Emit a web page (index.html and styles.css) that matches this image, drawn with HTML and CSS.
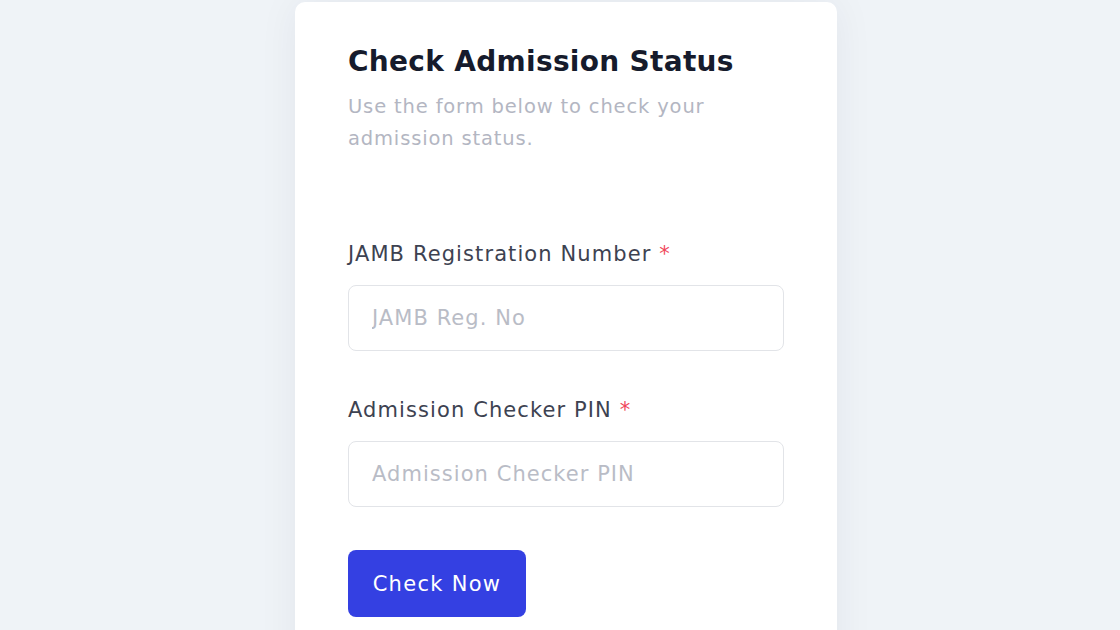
FILE: index.html
```html
<!DOCTYPE html>
<html lang="en">
  <head>
    <meta charset="UTF-8" />
    <meta name="viewport" content="width=device-width, initial-scale=1.0" />
    <title>Check Admission Status</title>
    <link rel="stylesheet" href="styles.css">
  </head>
  <body>
    <div class="page">
      <div class="card">
        <h1>Check Admission Status</h1>
        <p class="lead">Use the form below to check your admission status.</p>

        <form action="" class="check-form">
          <label for="reg-no">JAMB Registration Number <span class="req">*</span></label>
          <input type="text" id="reg-no" placeholder="JAMB Reg. No" />

          <label for="pin" class="second">Admission Checker PIN <span class="req">*</span></label>
          <input type="text" id="pin" placeholder="Admission Checker PIN" />

          <button type="submit" class="btn">Check Now</button>
        </form>
      </div>
    </div>
  </body>
</html>
```

FILE: styles.css
```css
html,
body {
  margin: 0;
  height: 100%;
  overflow: hidden;
}
body {
  font-family: "DejaVu Sans", "Open Sans", sans-serif;
  background-color: #eff3f7;
  color: #111827;
}
.page {
  display: flex;
  justify-content: center;
  padding: 2px 0 0 12px;
}
.card {
  width: 542px;
  box-sizing: border-box;
  background: #fff;
  border-radius: 10px;
  box-shadow: 0 0 40px rgba(30, 40, 70, 0.06);
  padding: 42px 53px 80px 53px;
  min-height: 700px;
}
h1 {
  margin: 0;
  font-size: 28px;
  line-height: 36px;
  font-weight: 600;
  letter-spacing: 0.3px;
  color: #161b2c;
}
.lead {
  margin: 11px 0 0;
  font-size: 19.5px;
  line-height: 32px;
  letter-spacing: 0.85px;
  color: #b3b6c2;
  max-width: 390px;
}
.check-form {
  display: flex;
  flex-direction: column;
  align-items: flex-start;
  margin-top: 84px;
}
label {
  font-size: 21px;
  line-height: 30px;
  letter-spacing: 1.1px;
  color: #3d4251;
}
label.second {
  margin-top: 44px;
}
.req {
  color: #f0465a;
  letter-spacing: 0;
}
input {
  margin-top: 16px;
  width: 100%;
  height: 66px;
  box-sizing: border-box;
  border: 1px solid #e2e4e8;
  border-radius: 8px;
  padding: 0 23px;
  font-family: inherit;
  font-size: 21px;
  letter-spacing: 1.05px;
  color: #3d4251;
  outline: none;
}
input::placeholder {
  color: #b9bcc6;
}
.btn {
  margin-top: 43px;
  width: 178px;
  height: 67px;
  border: none;
  border-radius: 8px;
  background: #3440e2;
  color: #fff;
  font-family: inherit;
  font-size: 21px;
  letter-spacing: 1.3px;
  cursor: pointer;
}
```
